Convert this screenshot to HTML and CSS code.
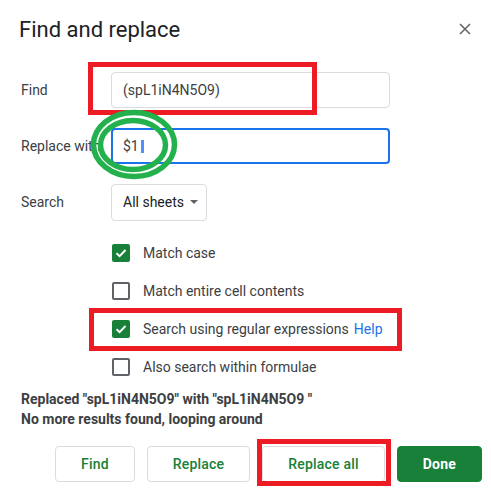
FILE: index.html
```html
<!DOCTYPE html>
<html lang="en">

<head>
    <meta charset="UTF-8">
    <meta name="viewport" content="width=device-width, initial-scale=1.0">
    <title>Find and replace</title>
    <link rel="stylesheet" href="styles.css">
</head>

<body>
    <div class="dialog">
        <div class="head">
            <h1 class="title">Find and replace</h1>
            <span class="close">
                <svg width="12" height="12" viewBox="0 0 12 12"><path d="M1 1L11 11M11 1L1 11" stroke="#5f6368" stroke-width="1.5" fill="none"/></svg>
            </span>
        </div>

        <div class="fields">
            <div class="label">Find</div>
            <div class="input">(spL1iN4N5O9)</div>

            <div class="label">Replace with</div>
            <div class="input focused">$1<span class="cursor"></span></div>

            <div class="label">Search</div>
            <div class="select">All sheets <span class="arrow"></span></div>
        </div>

        <div class="checks">
            <div class="check"><span class="box on"><svg width="14" height="14" viewBox="0 0 14 14"><path d="M2.5 7.2L5.6 10.2L11.5 4" stroke="#fff" stroke-width="2" fill="none"/></svg></span>Match case</div>
            <div class="check"><span class="box"></span>Match entire cell contents</div>
            <div class="check"><span class="box on"><svg width="14" height="14" viewBox="0 0 14 14"><path d="M2.5 7.2L5.6 10.2L11.5 4" stroke="#fff" stroke-width="2" fill="none"/></svg></span>Search using regular expressions <a class="help">Help</a></div>
            <div class="check"><span class="box"></span>Also search within formulae</div>
        </div>

        <p class="status">Replaced "spL1iN4N5O9" with "spL1iN4N5O9 "<br>No more results found, looping around</p>

        <div class="actions">
            <button class="btn">Find</button>
            <button class="btn">Replace</button>
            <button class="btn">Replace all</button>
            <button class="btn primary">Done</button>
        </div>

        <!-- annotations drawn on top of the screenshot -->
        <svg class="marks" width="491" height="494" viewBox="0 0 491 494">
            <rect x="90.5" y="64.5" width="224" height="48" fill="none" stroke="#ed1c24" stroke-width="5"/>
            <rect x="91.5" y="310.5" width="308" height="38" fill="none" stroke="#ed1c24" stroke-width="5"/>
            <rect x="259.5" y="441.5" width="129" height="42" fill="none" stroke="#ed1c24" stroke-width="5"/>
            <ellipse cx="134" cy="144.5" rx="40.5" ry="32" fill="none" stroke="#22b14c" stroke-width="5.5"/>
            <ellipse cx="133" cy="145" rx="32.5" ry="24.5" fill="none" stroke="#22b14c" stroke-width="5.5"/>
        </svg>
    </div>
</body>

</html>
```

FILE: styles.css
```css
body {
    margin: 0;
    background: #fff;
    font-family: Roboto, "Liberation Sans", sans-serif;
    color: #3c4043;
}

.dialog {
    position: relative;
    width: 491px;
    height: 494px;
    box-sizing: border-box;
    padding: 16px 9px 0 21px;
}

.head {
    display: flex;
    justify-content: space-between;
    align-items: center;
    height: 28px;
}

.title {
    margin: 0 0 0 -2px;
    font-size: 22px;
    font-weight: 400;
    line-height: 28px;
    color: #202124;
}

.close {
    display: flex;
    margin-right: 11px;
    margin-top: -3px;
}

.fields {
    display: grid;
    grid-template-columns: 90px 279px;
    grid-auto-rows: 36px;
    row-gap: 20px;
    align-items: center;
    margin-top: 28px;
    font-size: 14px;
}

.input {
    height: 36px;
    box-sizing: border-box;
    border: 1px solid #dadce0;
    border-radius: 4px;
    padding: 0 11px;
    display: flex;
    align-items: center;
}

.input.focused {
    border: 2px solid #1a73e8;
    padding: 0 10px;
}

.cursor {
    display: inline-block;
    width: 3px;
    height: 13px;
    margin-left: 2px;
    background: #4d90fe;
}

.select {
    justify-self: start;
    height: 37px;
    box-sizing: border-box;
    border: 1px solid #dadce0;
    border-radius: 4px;
    padding: 0 8px 0 11px;
    display: flex;
    align-items: center;
    color: #202124;
}

.arrow {
    width: 0;
    height: 0;
    margin-left: 6px;
    border-left: 4px solid transparent;
    border-right: 4px solid transparent;
    border-top: 4px solid #5f6368;
}

.checks {
    margin-top: 14px;
    padding-left: 91px;
    font-size: 14px;
}

.check {
    display: flex;
    align-items: center;
    height: 38px;
}

.box {
    width: 18px;
    height: 18px;
    box-sizing: border-box;
    border: 2px solid #5f6368;
    border-radius: 2px;
    margin-right: 13px;
    display: flex;
    align-items: center;
    justify-content: center;
}

.box.on {
    background: #188038;
    border-color: #188038;
}

.help {
    color: #1a73e8;
    margin-left: 5px;
}

.status {
    margin: 3px 0 0;
    font-size: 14px;
    font-weight: 700;
    line-height: 20px;
    color: #3c4043;
}

.actions {
    display: flex;
    justify-content: flex-end;
    gap: 12px;
    margin-top: 17px;
}

.btn {
    height: 36px;
    padding: 0 25px;
    border: 1px solid #dadce0;
    border-radius: 4px;
    background: #fff;
    color: #188038;
    font-family: Roboto, "Liberation Sans", sans-serif;
    font-size: 14px;
    font-weight: 500;
    letter-spacing: 0.2px;
}

.btn.primary {
    background: #188038;
    border-color: #188038;
    color: #fff;
    font-weight: 700;
}

.marks {
    position: absolute;
    left: 0;
    top: 0;
    pointer-events: none;
}
```
